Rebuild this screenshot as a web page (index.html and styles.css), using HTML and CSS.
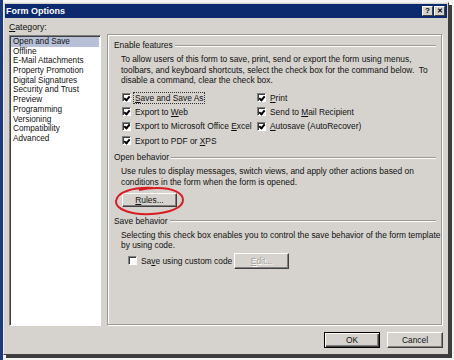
FILE: index.html
```html
<!DOCTYPE html>
<html>
<head>
<meta charset="utf-8">
<link rel="stylesheet" href="styles.css">
</head>
<body>
<div class="dialog">
  <div class="titlebar">
    <span class="title">Form Options</span>
    <div class="tb-buttons">
      <span class="tb-btn">?</span>
      <span class="tb-btn close">✕</span>
    </div>
  </div>
  <div class="content">
    <div class="cat-label"><u>C</u>ategory:</div>
    <ul class="listbox">
      <li class="sel">Open and Save</li>
      <li>Offline</li>
      <li>E-Mail Attachments</li>
      <li>Property Promotion</li>
      <li>Digital Signatures</li>
      <li>Security and Trust</li>
      <li>Preview</li>
      <li>Programming</li>
      <li>Versioning</li>
      <li>Compatibility</li>
      <li>Advanced</li>
    </ul>
    <div class="panel">
      <div class="group-title">Enable features</div>
      <p class="desc first">To allow users of this form to save, print, send or export the form using menus,<br>toolbars, and keyboard shortcuts, select the check box for the command below.&nbsp; To<br>disable a command, clear the check box.</p>
      <div class="checks">
        <div class="chk"><span class="box on"></span><span class="lbl focus"><u>S</u>ave and Save As</span></div>
        <div class="chk"><span class="box on"></span><span class="lbl"><u>P</u>rint</span></div>
        <div class="chk"><span class="box on"></span><span class="lbl">Export to <u>W</u>eb</span></div>
        <div class="chk"><span class="box on"></span><span class="lbl">Send to <u>M</u>ail Recipient</span></div>
        <div class="chk"><span class="box on"></span><span class="lbl">Export to Microsoft Office <u>E</u>xcel</span></div>
        <div class="chk"><span class="box on"></span><span class="lbl"><u>A</u>utosave (AutoRecover)</span></div>
        <div class="chk"><span class="box on"></span><span class="lbl">Export to PDF or <u>X</u>PS</span></div>
      </div>
      <div class="group-title g2">Open behavior</div>
      <p class="desc">Use rules to display messages, switch views, and apply other actions based on<br>conditions in the form when the form is opened.</p>
      <div class="btn rules"><span><u>R</u>ules...</span></div>
      <div class="group-title g3">Save behavior</div>
      <p class="desc">Selecting this check box enables you to control the save behavior of the form template<br>by using code.</p>
      <div class="custom-row">
        <div class="chk"><span class="box"></span><span class="lbl">Sa<u>v</u>e using custom code</span></div>
        <div class="btn disabled"><span><u>E</u>dit...</span></div>
      </div>
      <svg class="circle" width="74" height="32" viewBox="0 0 74 32">
        <path d="M40 3 C20 2 4 7 3 16 C2 25 20 30 38 29 C56 28 70 23 70 15 C70 8 60 3 44 3 C36 3 30 4 26 5" fill="none" stroke="#d81c22" stroke-width="2"/>
      </svg>
    </div>
  </div>
  <div class="footer">
    <div class="btn ok"><span>OK</span></div>
    <div class="btn"><span>Cancel</span></div>
  </div>
</div>
</body>
</html>
```
FILE: styles.css
```css
html, body { margin: 0; padding: 0; }
body {
  background: #f4f4f2;
  width: 454px;
  height: 360px;
  overflow: hidden;
  font-family: "Liberation Sans", Arial, sans-serif;
  font-size: 8.4px;
  color: #111;
  border-left: 3px solid #1d3a7a;
  box-sizing: border-box;
}
.dialog {
  margin-top: 2px;
  width: 446px;
  height: 353px;
  box-sizing: border-box;
  background: #d6d3ce;
  border: 1px solid;
  border-color: #eeece8 #404040 #404040 #eeece8;
  padding: 1px;
  box-shadow: 3px 3px 0 #3c3c3c;
  display: flex;
  flex-direction: column;
}
.titlebar {
  height: 14px;
  background: #0c2a6e;
  display: flex;
  align-items: center;
  justify-content: space-between;
  padding: 0 2px 0 1px;
}
.title {
  color: #fff;
  font-weight: bold;
  font-size: 9px;
}
.tb-buttons { display: flex; gap: 1px; }
.tb-btn {
  width: 11px;
  height: 10px;
  box-sizing: border-box;
  background: #d6d3ce;
  border: 1px solid;
  border-color: #fff #404040 #404040 #fff;
  font-size: 8px;
  font-weight: bold;
  line-height: 8px;
  text-align: center;
  color: #000;
}
.tb-btn.close { font-size: 7px; }
.content {
  display: grid;
  grid-template-columns: 92px 336px;
  grid-template-rows: auto 291px;
  column-gap: 6px;
  padding: 0 4px;
}
.cat-label {
  grid-column: 1;
  line-height: 11px;
  margin: 4px 0 2px 0;
  font-size: 8.7px;
}
.listbox {
  grid-column: 1;
  grid-row: 2;
  margin: 0;
  padding: 0;
  list-style: none;
  background: #fff;
  border: 1px solid;
  border-color: #808080 #fff #fff #808080;
  box-shadow: inset 1px 1px 0 #404040;
  box-sizing: border-box;
  font-size: 8.2px;
}
.listbox li {
  height: 9.7px;
  line-height: 9.7px;
  padding-left: 2px;
  margin-left: 1px;
  white-space: nowrap;
}
.listbox li.sel { background: #b7c0d6; margin-right: 1px; margin-top: 1px; }
.panel {
  grid-column: 2;
  grid-row: 2;
  position: relative;
  margin-top: -1px;
  border: 1px solid;
  border-color: #9a9893 #fff #fff #9a9893;
  box-shadow: inset -1px -1px 0 #9a9893, inset 1px 1px 0 #fff;
  box-sizing: border-box;
  padding: 5px 6px 0 6px;
}
.group-title {
  display: flex;
  align-items: center;
  gap: 2px;
  height: 11px;
  line-height: 11px;
}
.group-title::after {
  content: "";
  flex: 1;
  border-top: 1px solid #9a9893;
  border-bottom: 1px solid #fff;
}
.desc {
  margin: 3px 0 0 7px;
  line-height: 10.5px;
  white-space: nowrap;
}
.checks {
  display: grid;
  grid-template-columns: 135px auto;
  grid-auto-rows: 14.3px;
  margin: 5px 0 0 8px;
}
.chk { display: flex; align-items: center; gap: 3px; white-space: nowrap; }
.box {
  width: 9px;
  height: 9px;
  box-sizing: border-box;
  background: #fff;
  border: 1px solid;
  border-color: #808080 #fff #fff #808080;
  box-shadow: inset 1px 1px 0 #404040;
  position: relative;
  flex: none;
}
.box.on::after {
  content: "";
  position: absolute;
  left: 1.5px;
  top: 0.5px;
  width: 2px;
  height: 4px;
  border: solid #000;
  border-width: 0 2px 2px 0;
  transform: rotate(40deg);
}
.lbl { padding: 0 1px; }
.lbl.focus { outline: 1px dotted #333; }
.g2 { margin-top: 4.5px; }
.g3 { margin-top: 8.5px; }
.btn {
  width: 55px;
  height: 14px;
  box-sizing: border-box;
  background: #d6d3ce;
  border: 1px solid;
  border-color: #fff #404040 #404040 #fff;
  box-shadow: inset -1px -1px 0 #808080;
  display: flex;
  align-items: center;
  justify-content: center;
}
.rules { margin: 6px 0 0 8px; }
.custom-row {
  display: flex;
  align-items: center;
  margin: 2px 0 0 14px;
  height: 16px;
}
.custom-row .chk { width: 106px; min-width: 0; flex: none; }
.btn.disabled { height: 16px; color: #a6a39e; text-shadow: 1px 1px 0 #fff; }
.circle { position: absolute; left: 5px; top: 150px; }
.footer {
  display: flex;
  justify-content: flex-end;
  gap: 7px;
  padding: 6px 4px 0 0;
}
.footer .btn { width: 56px; height: 16px; }
.footer .ok { border-color: #000; box-shadow: inset 1px 1px 0 #fff, inset -1px -1px 0 #404040, inset -2px -2px 0 #808080; }
```
